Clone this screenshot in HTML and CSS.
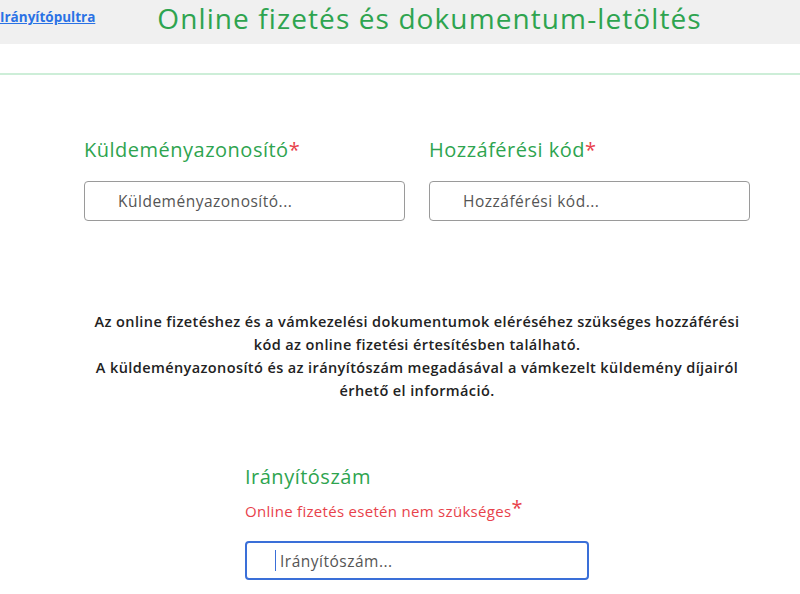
FILE: index.html
```html
<!DOCTYPE html>
<html lang="hu">
<head>
    <meta charset="UTF-8">
    <title>Online fizetés és dokumentum-letöltés</title>
    <link rel="stylesheet" href="styles.css">
</head>
<body>
    <div class="topbar">
        <a href="#" class="back-link">Irányítópultra</a>
        <h1 class="page-title">Online fizetés és dokumentum-letöltés</h1>
    </div>
    <div class="divider"></div>

    <div class="content">
        <div class="field-row">
            <div class="field">
                <label class="field-label">Küldeményazonosító<span class="req">*</span></label>
                <input type="text" class="text-input" placeholder="Küldeményazonosító...">
            </div>
            <div class="field">
                <label class="field-label">Hozzáférési kód<span class="req">*</span></label>
                <input type="text" class="text-input" placeholder="Hozzáférési kód...">
            </div>
        </div>

        <p class="info">
            Az online fizetéshez és a vámkezelési dokumentumok eléréséhez szükséges hozzáférési<br>
            kód az online fizetési értesítésben található.<br>
            A küldeményazonosító és az irányítószám megadásával a vámkezelt küldemény díjairól<br>
            érhető el információ.
        </p>

        <div class="zip-field">
            <label class="field-label">Irányítószám</label>
            <div class="note">Online fizetés esetén nem szükséges<span class="note-star">*</span></div>
            <div class="text-input focused"><span class="caret"></span><span class="ph">Irányítószám...</span></div>
        </div>
    </div>
</body>
</html>
```

FILE: styles.css
```css
body {
    margin: 0;
    font-family: "Open Sans", "Noto Sans", sans-serif;
    background-color: #ffffff;
    overflow: hidden;
}
.topbar {
    height: 44px;
    background-color: #f0f0f0;
    display: flex;
    align-items: flex-start;
}
.back-link {
    margin-top: 8px;
    font-size: 13.5px;
    font-weight: 700;
    color: #2a72e5;
    text-decoration: underline;
}
.page-title {
    margin: 0 0 0 62px;
    font-size: 28px;
    letter-spacing: 1.1px;
    font-weight: 400;
    color: #2ea44f;
    line-height: 36px;
}
.divider {
    margin-top: 29px;
    height: 2px;
    background-color: #cdeed8;
}

.content {
    padding: 0 50px 0 84px;
}
.field-row {
    display: flex;
    gap: 24px;
    margin-top: 62px;
}
.field {
    width: 321px;
}
.field-label {
    display: block;
    font-size: 20px;
    letter-spacing: 0.5px;
    color: #2ea44f;
    line-height: 26px;
}
.req {
    color: #e8424b;
}
.text-input {
    box-sizing: border-box;
    display: block;
    width: 100%;
    height: 40px;
    margin-top: 18px;
    padding: 0 0 0 33px;
    border: 1px solid #9a9a9a;
    border-radius: 4px;
    font-family: inherit;
    font-size: 15.5px;
    letter-spacing: 0.5px;
    color: #333;
    background: #fff;
}
.text-input::placeholder {
    color: #555;
}
.info {
    width: 666px;
    margin: 89px 0 0 0;
    text-align: center;
    font-size: 14.5px;
    letter-spacing: 0.4px;
    font-weight: 600;
    line-height: 23px;
    color: #222;
}
.zip-field {
    width: 344px;
    margin: 62px 0 0 161px;
}
.note {
    margin-top: 11px;
    font-size: 15px;
    letter-spacing: 0.3px;
    color: #e8424b;
}
.note-star {
    font-size: 20px;
    vertical-align: top;
    line-height: 14px;
}
.text-input.focused {
    margin-top: 20px;
    height: 39px;
    border: 2px solid #3a6fd8;
    display: flex;
    align-items: center;
    padding-left: 28px;
}
.caret {
    width: 1px;
    height: 21px;
    background-color: #3a6fd8;
    margin-right: 4px;
}
.ph {
    color: #555;
}
```
